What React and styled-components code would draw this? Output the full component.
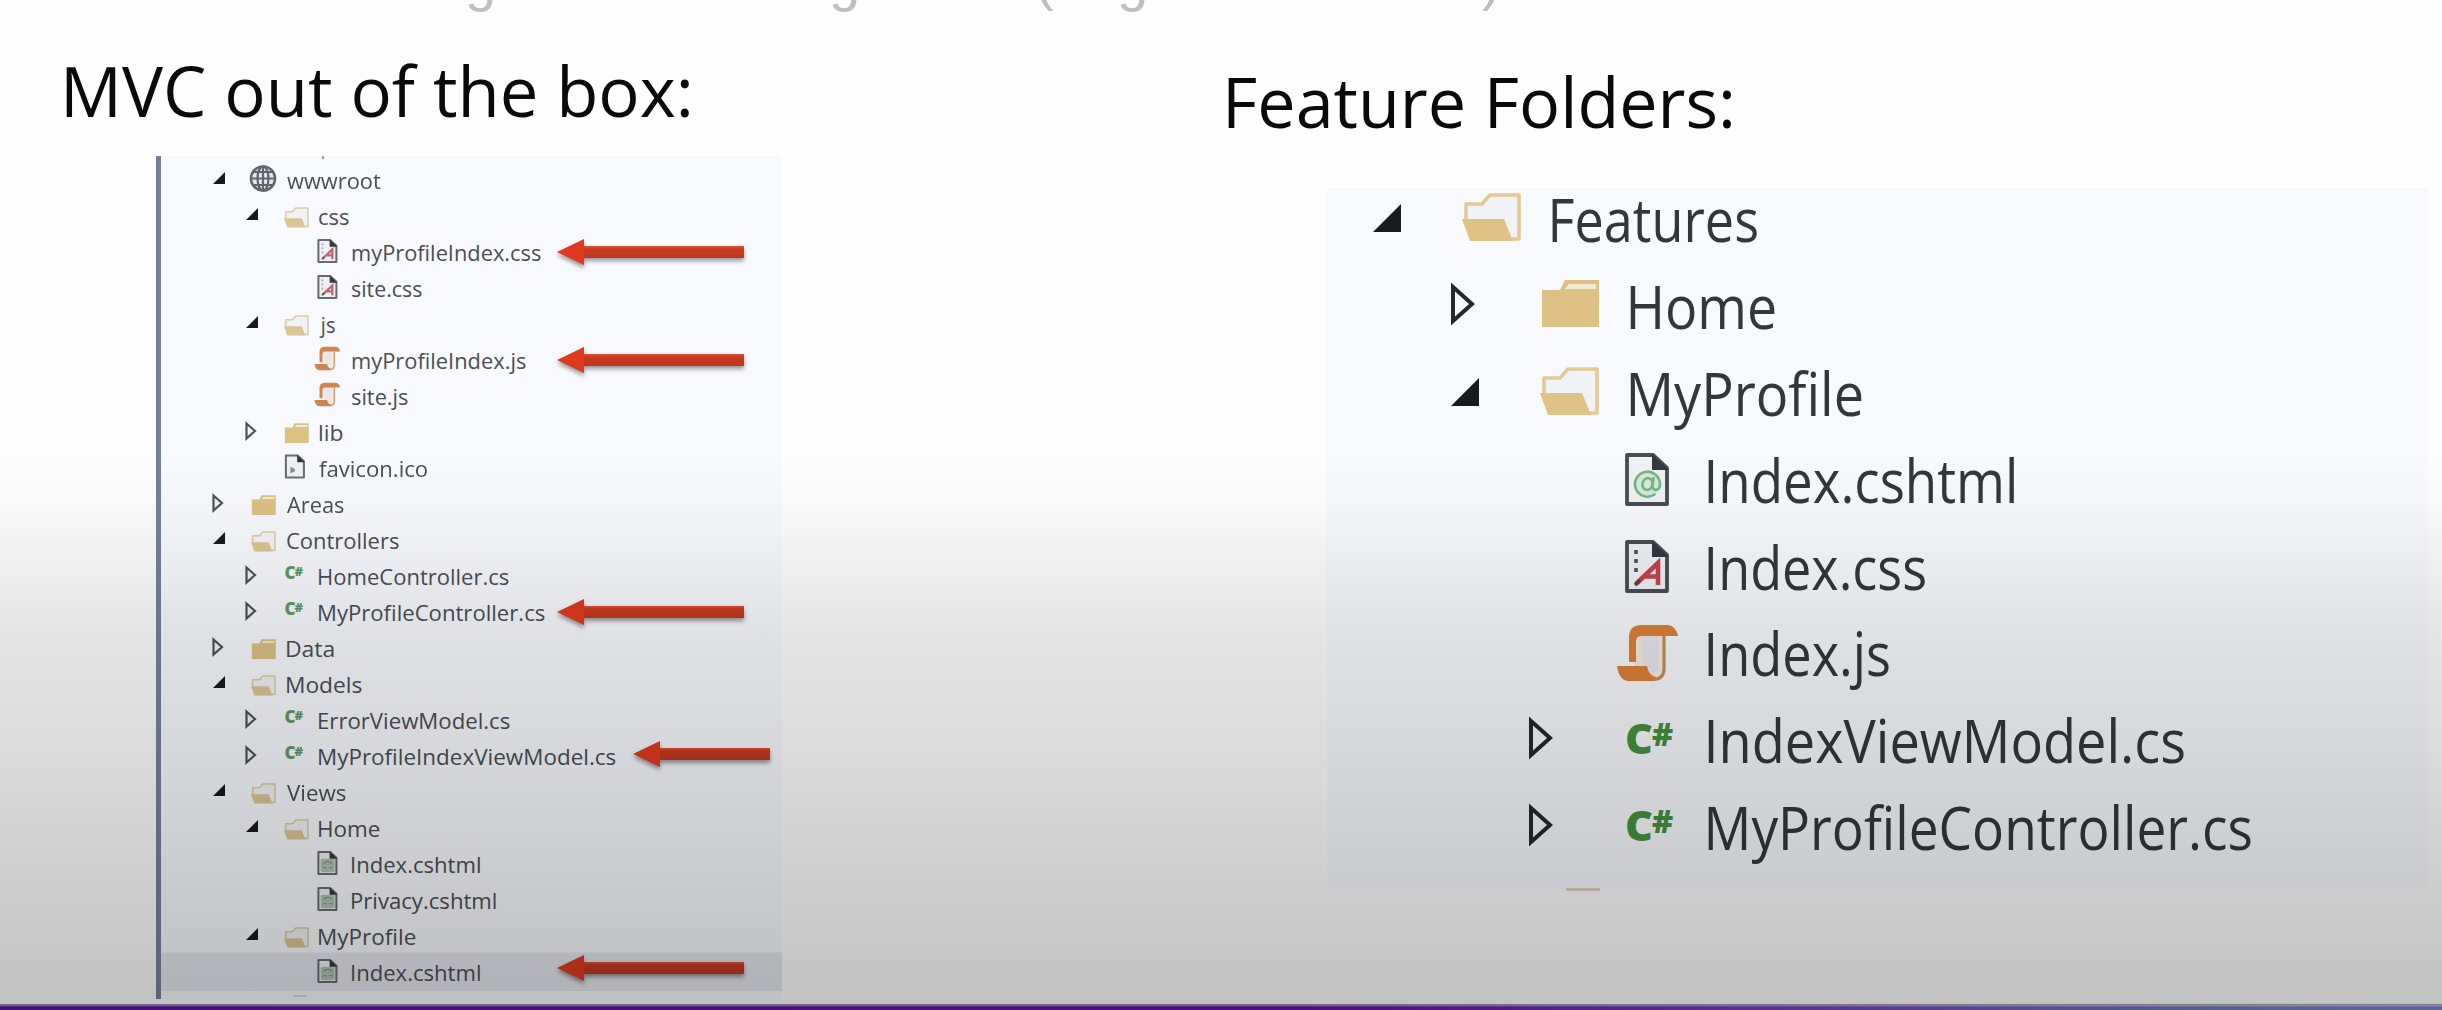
import React from "react";
import styled, { createGlobalStyle } from "styled-components";

const FONT = '"Open Sans", "Noto Sans", sans-serif';

const Global = createGlobalStyle`
  * { box-sizing: border-box; }
  body { margin: 0; background: #fdfdfd; font-family: ${FONT}; }
`;

const Slide = styled.div`
  position: relative;
  display: flex;
  flex-direction: column;
  width: 2442px;
  height: 1010px;
  overflow: hidden;
  background: #fdfdfd;
`;

const Shade = styled.div`
  position: absolute;
  inset: 0 0 5px 0;
  pointer-events: none;
  background: linear-gradient(
    to bottom,
    rgba(3, 4, 2, 0) 450px,
    rgba(3, 4, 2, 0.015) 500px,
    rgba(3, 4, 2, 0.06) 570px,
    rgba(3, 4, 2, 0.1) 640px,
    rgba(3, 4, 2, 0.135) 740px,
    rgba(3, 4, 2, 0.18) 860px,
    rgba(3, 4, 2, 0.235) 1000px
  );
`;

const TitleRemnant = styled.div`
  display: grid;
  grid-template-columns: 364px 206px 82px 365px 40px;
  flex: none;
  height: 12px;
  padding-left: 465px;
  overflow: hidden;
  color: #bfbfbf;
  font: 56px/60px "Liberation Sans", sans-serif;
`;

const Glyph = styled.span`
  height: 60px;
  margin-top: ${(p) => p.$top}px;
`;

const Columns = styled.main`
  display: grid;
  grid-template-columns: 1228px 1fr;
  flex: 1;
  min-height: 0;
`;

const Column = styled.section`
  display: flex;
  flex-direction: column;
  padding: ${(p) => p.$pad};
`;

const Heading = styled.h1`
  flex: none;
  height: 80px;
  margin: 0 0 0 ${(p) => p.$shift || 0}px;
  color: #0a0a0a;
  font-size: 69px;
  font-weight: 400;
  line-height: 80px;
`;

const BottomBar = styled.footer`
  flex: none;
  height: 6px;
  background: linear-gradient(
      to bottom,
      rgba(200, 196, 204, 0.75) 0,
      rgba(200, 196, 204, 0.4) 1.5px,
      rgba(200, 196, 204, 0) 3px
    ),
    linear-gradient(to right, #43107a 0, #48107e 1300px, #5a2f8c 1750px, #56608f 2200px, #60669a 2442px);
`;

const FitBox = styled.span`
  display: block;
  flex: none;
  width: ${(p) => p.$width}px;
  white-space: nowrap;
`;

const FitInner = styled.span`
  display: inline-block;
  transform-origin: 0 50%;
  font-variant-ligatures: none;
`;

/* Stretches a line so that its ink spans exactly the given width. */
function FitText({ size, width, children }) {
  const style = React.useMemo(() => {
    const ctx = document.createElement("canvas").getContext("2d");
    ctx.font = `400 ${size}px ${FONT}`;
    ctx.letterSpacing = "0.01px";
    const m = ctx.measureText(children);
    const left = -m.actualBoundingBoxLeft;
    const ratio = width / (m.actualBoundingBoxRight - left);
    return { transform: `scaleX(${ratio}) translateX(${-left}px)` };
  }, [size, width, children]);
  return (
    <FitBox $width={width}>
      <FitInner style={style}>{children}</FitInner>
    </FitBox>
  );
}

const Tree = styled.div`
  flex: none;
  display: flex;
  flex-direction: column;
  width: ${(p) => p.$w}px;
  height: ${(p) => p.$h}px;
  margin: ${(p) => p.$margin};
  border-left: ${(p) => (p.$edge ? "5px solid #75809c" : "none")};
  overflow: hidden;
  background: ${(p) =>
    p.$edge
      ? "linear-gradient(to bottom, #f7f9fd 836px, #f8f9fa 840px)"
      : "#f7f9fd"};
`;

const Sliver = styled.div`
  flex: none;
  width: ${(p) => p.$w}px;
  height: ${(p) => p.$h}px;
  margin: ${(p) => p.$margin};
  background: ${(p) => p.$color};
`;

const Row = styled.div`
  display: flex;
  flex: none;
  align-items: flex-start;
  height: ${(p) => p.$m.row}px;
  padding-left: ${(p) => p.$m.start + p.$level * p.$m.indent}px;
  background: ${(p) => (p.$selected ? "#e6e7ee" : "transparent")};
  box-shadow: ${(p) => (p.$selected ? "0 -1.5px 0 #e6e7ee, 0 1px 0 #e6e7ee" : "none")};
`;

const Slot = styled.span`
  flex: none;
  width: ${(p) => p.$w}px;
  height: 100%;
  svg { display: block; overflow: visible; }
`;

const Label = styled.span`
  margin-left: ${(p) => p.$m.nudge}px;
  color: ${(p) => p.$m.ink};
  font-size: ${(p) => p.$m.font}px;
  line-height: ${(p) => p.$m.line}px;
`;

const ArrowBox = styled.span`
  align-self: center;
  margin: 0 ${(p) => p.$right}px ${(p) => p.$lift}px auto;
  svg { display: block; overflow: visible; filter: drop-shadow(0 3px 2px rgba(60, 50, 50, 0.5)); }
`;

function Arrow({ w, right, lift }) {
  return (
    <ArrowBox $right={right} $lift={lift * 2}>
      <svg width={w} height="26" viewBox={`0 0 ${w} 26`}>
        <defs>
          <linearGradient id={`shaft${w}`} x1="0" y1="0" x2="0" y2="1">
            <stop offset="0" stopColor="#e2532f" />
            <stop offset="0.25" stopColor="#c8391f" />
            <stop offset="1" stopColor="#bd3722" />
          </linearGradient>
        </defs>
        <rect x="24" y="7" width={w - 24} height="12" fill={`url(#shaft${w})`} />
        <path d="M0 13 L27 0 V26 Z" fill="#e03a1e" />
      </svg>
    </ArrowBox>
  );
}

const BIG = { row: 86.9, start: 45, indent: 78, caret: 90, icon: 88, font: 59.5, line: 62, ink: "#33373b", nudge: 2 };
const SMALL = { row: 36.03, start: 52, indent: 32.5, caret: 38, icon: 34, font: 22, line: 37, ink: "#4a4e55", nudge: 1.5 };

function Caret({ open, small }) {
  if (small) {
    return (
      <svg width="14" height="36">
        {open ? (
          <path d="M12 10 V22 H0 Z" fill="#16191d" />
        ) : (
          <path d="M0.5 9.5 L9 17 L0.5 24.5 Z" fill="#f2f4f7" stroke="#4d5156" strokeWidth="2.2" />
        )}
      </svg>
    );
  }
  return (
    <svg width="32" height="86">
      {open ? (
        <path d="M29 16 V44 H1 Z" fill="#171b20" />
      ) : (
        <path d="M3 12 L22 29 L3 46 Z" fill="none" stroke="#24282e" strokeWidth="4" />
      )}
    </svg>
  );
}

const Globe = () => (
  <svg width="28" height="36">
    <g transform="translate(12 16.5)" fill="none" stroke="#62666c" strokeWidth="2.2">
      <circle r="12" fill="#e3e6ea" strokeWidth="2.6" />
      <ellipse rx="5.5" ry="12" />
      <path d="M0 -12 V12 M-12 0 H12 M-10 -6.5 H10 M-10 6.5 H10" />
    </g>
  </svg>
);

const FolderOpen = ({ small }) => (
  <svg width={small ? 26 : 62} height={small ? 36 : 86}>
    <g transform={small ? "scale(0.42) translate(0 17)" : ""}>
      <path
        d="M4 36 V16 H20 L28 7 H57 V51 H50"
        fill="#f1f2f6"
        stroke={small ? "#ddcba4" : "#e4c995"}
        strokeWidth="3.6"
        strokeLinejoin="round"
      />
      <path d="M0 31 H42 L51 53 H8 Z" fill={small ? "#dac594" : "#dfc285"} />
    </g>
  </svg>
);

const FolderClosed = ({ small }) => (
  <svg width={small ? 26 : 62} height={small ? 36 : 86}>
    <g transform={small ? "scale(0.42) translate(0 17)" : ""}>
      <path d="M2 15 H20 L25 5 H59 V52 H2 Z" fill="#dcc084" />
      <path d="M25 14 L29 9 H56 V14 Z" fill="#f4ead2" />
    </g>
  </svg>
);

const Sheet = ({ children, stroke, w }) => (
  <>
    <path d="M2 2 H28 L42 15 V51 H2 Z" fill="#eef0f3" stroke={stroke} strokeWidth={w} strokeLinejoin="round" />
    {children}
    <path d="M27 1 L44 17 H27 Z" fill="#33383e" />
  </>
);

const Page = ({ small, children }) => (
  <svg width={small ? 26 : 62} height={small ? 36 : 86}>
    <g transform={small ? "translate(1.5 5) scale(0.45)" : "translate(7 4)"}>
      <Sheet stroke={small ? "#686c72" : "#484d53"} w={small ? 4.5 : 3.8}>
        {children}
      </Sheet>
    </g>
  </svg>
);

const Cshtml = ({ small }) => (
  <Page small={small}>
    {small ? (
      <>
        <rect x="7" y="17" width="31" height="30" rx="4" fill="#adc2b3" />
        <path d="M13 28 C18 21 28 21 32 28 M12 37 H20 M26 37 H33" stroke="#809a88" strokeWidth="3" fill="none" />
      </>
    ) : (
      <g transform="translate(22.5 31)" fill="none" stroke="#74b583" strokeWidth="2.6" strokeLinecap="round">
        <circle r="13" fill="#d5e8d8" stroke="none" />
        <path d="M7 10.5 A12.5 12.5 0 1 1 12.5 0 C12.5 7 5.5 7.5 5 2.5 L6 -6" />
        <ellipse rx="5" ry="6" transform="rotate(15)" />
      </g>
    )}
  </Page>
);

const Css = ({ small }) => (
  <Page small={small}>
    <path d="M11 10 V33" stroke={small ? "#a3a6ab" : "#50555b"} strokeWidth="3.6" strokeDasharray="4 5" />
    <path d="M11 44 L33 23 V45 M20 36.5 H33" fill="none" stroke={small ? "#bd6873" : "#c4424c"} strokeWidth={small ? 5 : 4.6} />
    <path d="M10 45 L15 40" stroke="#55454c" strokeWidth="3.6" />
  </Page>
);

const Ico = () => (
  <svg width="26" height="36">
    <g transform="translate(1 4.5) scale(0.45)">
      <Sheet stroke="#686c72" w={4.5}>
        <path d="M12 27 L22 32 V37 L12 42 Z" fill="#8a8e93" />
      </Sheet>
    </g>
  </svg>
);

const Script = ({ small }) => (
  <svg width={small ? 26 : 62} height={small ? 36 : 86}>
    <g transform={small ? "translate(-1.5 3.5) scale(0.42)" : "translate(-1 0)"}>
      <path d="M17 8 H46 V48 Q46 57 37 57 H12 Q17 52 17 44 Z" fill="#f8ecdc" />
      <path d="M23 10 H42 V50 H26 Z" fill="#e8e6ec" />
      <path d="M12 40 V15 Q12 4 23 3 H51 Q59 4 61 14 H24 Q19 14 19 20 V40 Z" fill={small ? "#cf8653" : "#dc8039"} />
      <path d="M0 44 H30 Q31 53 39 55 L38 59 H11 Q2 58 0 44 Z" fill={small ? "#c98555" : "#dc8039"} />
      <path d="M47 14 V47 Q47 57 36 57.5" fill="none" stroke={small ? "#d58f5e" : "#c98b58"} strokeWidth="3.2" />
    </g>
  </svg>
);

const SharpBox = styled.span`
  display: flex;
  align-items: flex-start;
  padding: ${(p) => (p.$small ? "8px 0 0 1px" : "10px 0 0 7px")};
  color: ${(p) => (p.$small ? "#5f9868" : "#46913f")};
  font-weight: 700;
  line-height: 1;
`;

const SharpC = styled.b`
  margin-top: ${(p) => (p.$small ? -2 : -3.5)}px;
  font-size: ${(p) => (p.$small ? 17 : 43)}px;
`;

const SharpSign = styled.b`
  margin: -1px 0 0 -1px;
  font-size: ${(p) => (p.$small ? 13 : 32)}px;
`;

const CSharp = ({ small }) => (
  <SharpBox $small={small}>
    <SharpC $small={small}>C</SharpC>
    <SharpSign $small={small}>#</SharpSign>
  </SharpBox>
);

const ICONS = {
  globe: Globe,
  open: FolderOpen,
  closed: FolderClosed,
  cshtml: Cshtml,
  css: Css,
  js: Script,
  ico: Ico,
  cs: CSharp,
};

const SHORT = { w: 137, right: 12, lift: 2 };
const LONG = { w: 187, right: 38, lift: 0 };

/* level, caret (1 expanded, 0 collapsed, null none), icon, label, label width, arrow, selected */
const DEFAULT_TREE = [
  [0, 1, "globe", "wwwroot", 94],
  [1, 1, "open", "css", 30],
  [2, null, "css", "myProfileIndex.css", 189, LONG],
  [2, null, "css", "site.css", 70],
  [1, 1, "open", "js", 16],
  [2, null, "js", "myProfileIndex.js", 174, LONG],
  [2, null, "js", "site.js", 56],
  [1, 0, "closed", "lib", 24],
  [1, null, "ico", "favicon.ico", 109],
  [0, 0, "closed", "Areas", 57],
  [0, 1, "open", "Controllers", 112],
  [1, 0, "cs", "HomeController.cs", 190],
  [1, 0, "cs", "MyProfileController.cs", 226, LONG],
  [0, 0, "closed", "Data", 47],
  [0, 1, "open", "Models", 75],
  [1, 0, "cs", "ErrorViewModel.cs", 191],
  [1, 0, "cs", "MyProfileIndexViewModel.cs", 297, SHORT],
  [0, 1, "open", "Views", 59],
  [1, 1, "open", "Home", 61],
  [2, null, "cshtml", "Index.cshtml", 128],
  [2, null, "cshtml", "Privacy.cshtml", 144],
  [1, 1, "open", "MyProfile", 97],
  [2, null, "cshtml", "Index.cshtml", 128, { ...LONG, lift: 4 }, true],
];

const FEATURE_TREE = [
  [0, 1, "open", "Features", 205],
  [1, 0, "closed", "Home", 145],
  [1, 1, "open", "MyProfile", 232],
  [2, null, "cshtml", "Index.cshtml", 306],
  [2, null, "css", "Index.css", 217],
  [2, null, "js", "Index.js", 181],
  [2, 0, "cs", "IndexViewModel.cs", 476],
  [2, 0, "cs", "MyProfileController.cs", 543],
];

function Rows({ items, metrics, small }) {
  return items.map(([level, caret, icon, text, width, arrow, selected], i) => {
    const Icon = ICONS[icon];
    return (
      <Row key={i} $m={metrics} $level={level} $selected={selected}>
        <Slot $w={metrics.caret}>{caret !== null && <Caret open={caret === 1} small={small} />}</Slot>
        <Slot $w={metrics.icon}>
          <Icon small={small} />
        </Slot>
        <Label $m={metrics}>
          <FitText size={metrics.font} width={width}>
            {text}
          </FitText>
        </Label>
        {arrow && <Arrow {...arrow} />}
      </Row>
    );
  });
}

export default function App() {
  return (
    <>
      <Global />
      <Slide>
        <TitleRemnant>
          <Glyph $top={-49}>g</Glyph>
          <Glyph $top={-49}>g</Glyph>
          <Glyph $top={-50}>(</Glyph>
          <Glyph $top={-49}>g</Glyph>
          <Glyph $top={-50}>)</Glyph>
        </TitleRemnant>
        <Columns>
          <Column $pad="38px 0 0 63px">
            <Heading $shift={3}>
              <FitText size={69} width={624}>MVC out of the box:</FitText>
            </Heading>
            <Tree $w={626} $h={843} $margin="26px 0 0 93px" $edge>
              <Sliver $w={2} $h={3} $margin="0 0 3px 161px" $color="#9a9ea5" />
              <Rows items={DEFAULT_TREE} metrics={SMALL} small />
              <Sliver $w={14} $h={2} $margin="5px 0 0 132px" $color="#dcd9d6" />
            </Tree>
          </Column>
          <Column $pad="49px 0 0 0">
            <Heading>
              <FitText size={69} width={504}>Feature Folders:</FitText>
            </Heading>
            <Tree $w={1101} $h={701} $margin="47px 0 0 99px">
              <Rows items={FEATURE_TREE} metrics={BIG} />
            </Tree>
            <Sliver $w={34} $h={3} $margin="-1px 0 0 338px" $color="#dfd3c2" />
          </Column>
        </Columns>
        <BottomBar />
        <Shade />
      </Slide>
    </>
  );
}
